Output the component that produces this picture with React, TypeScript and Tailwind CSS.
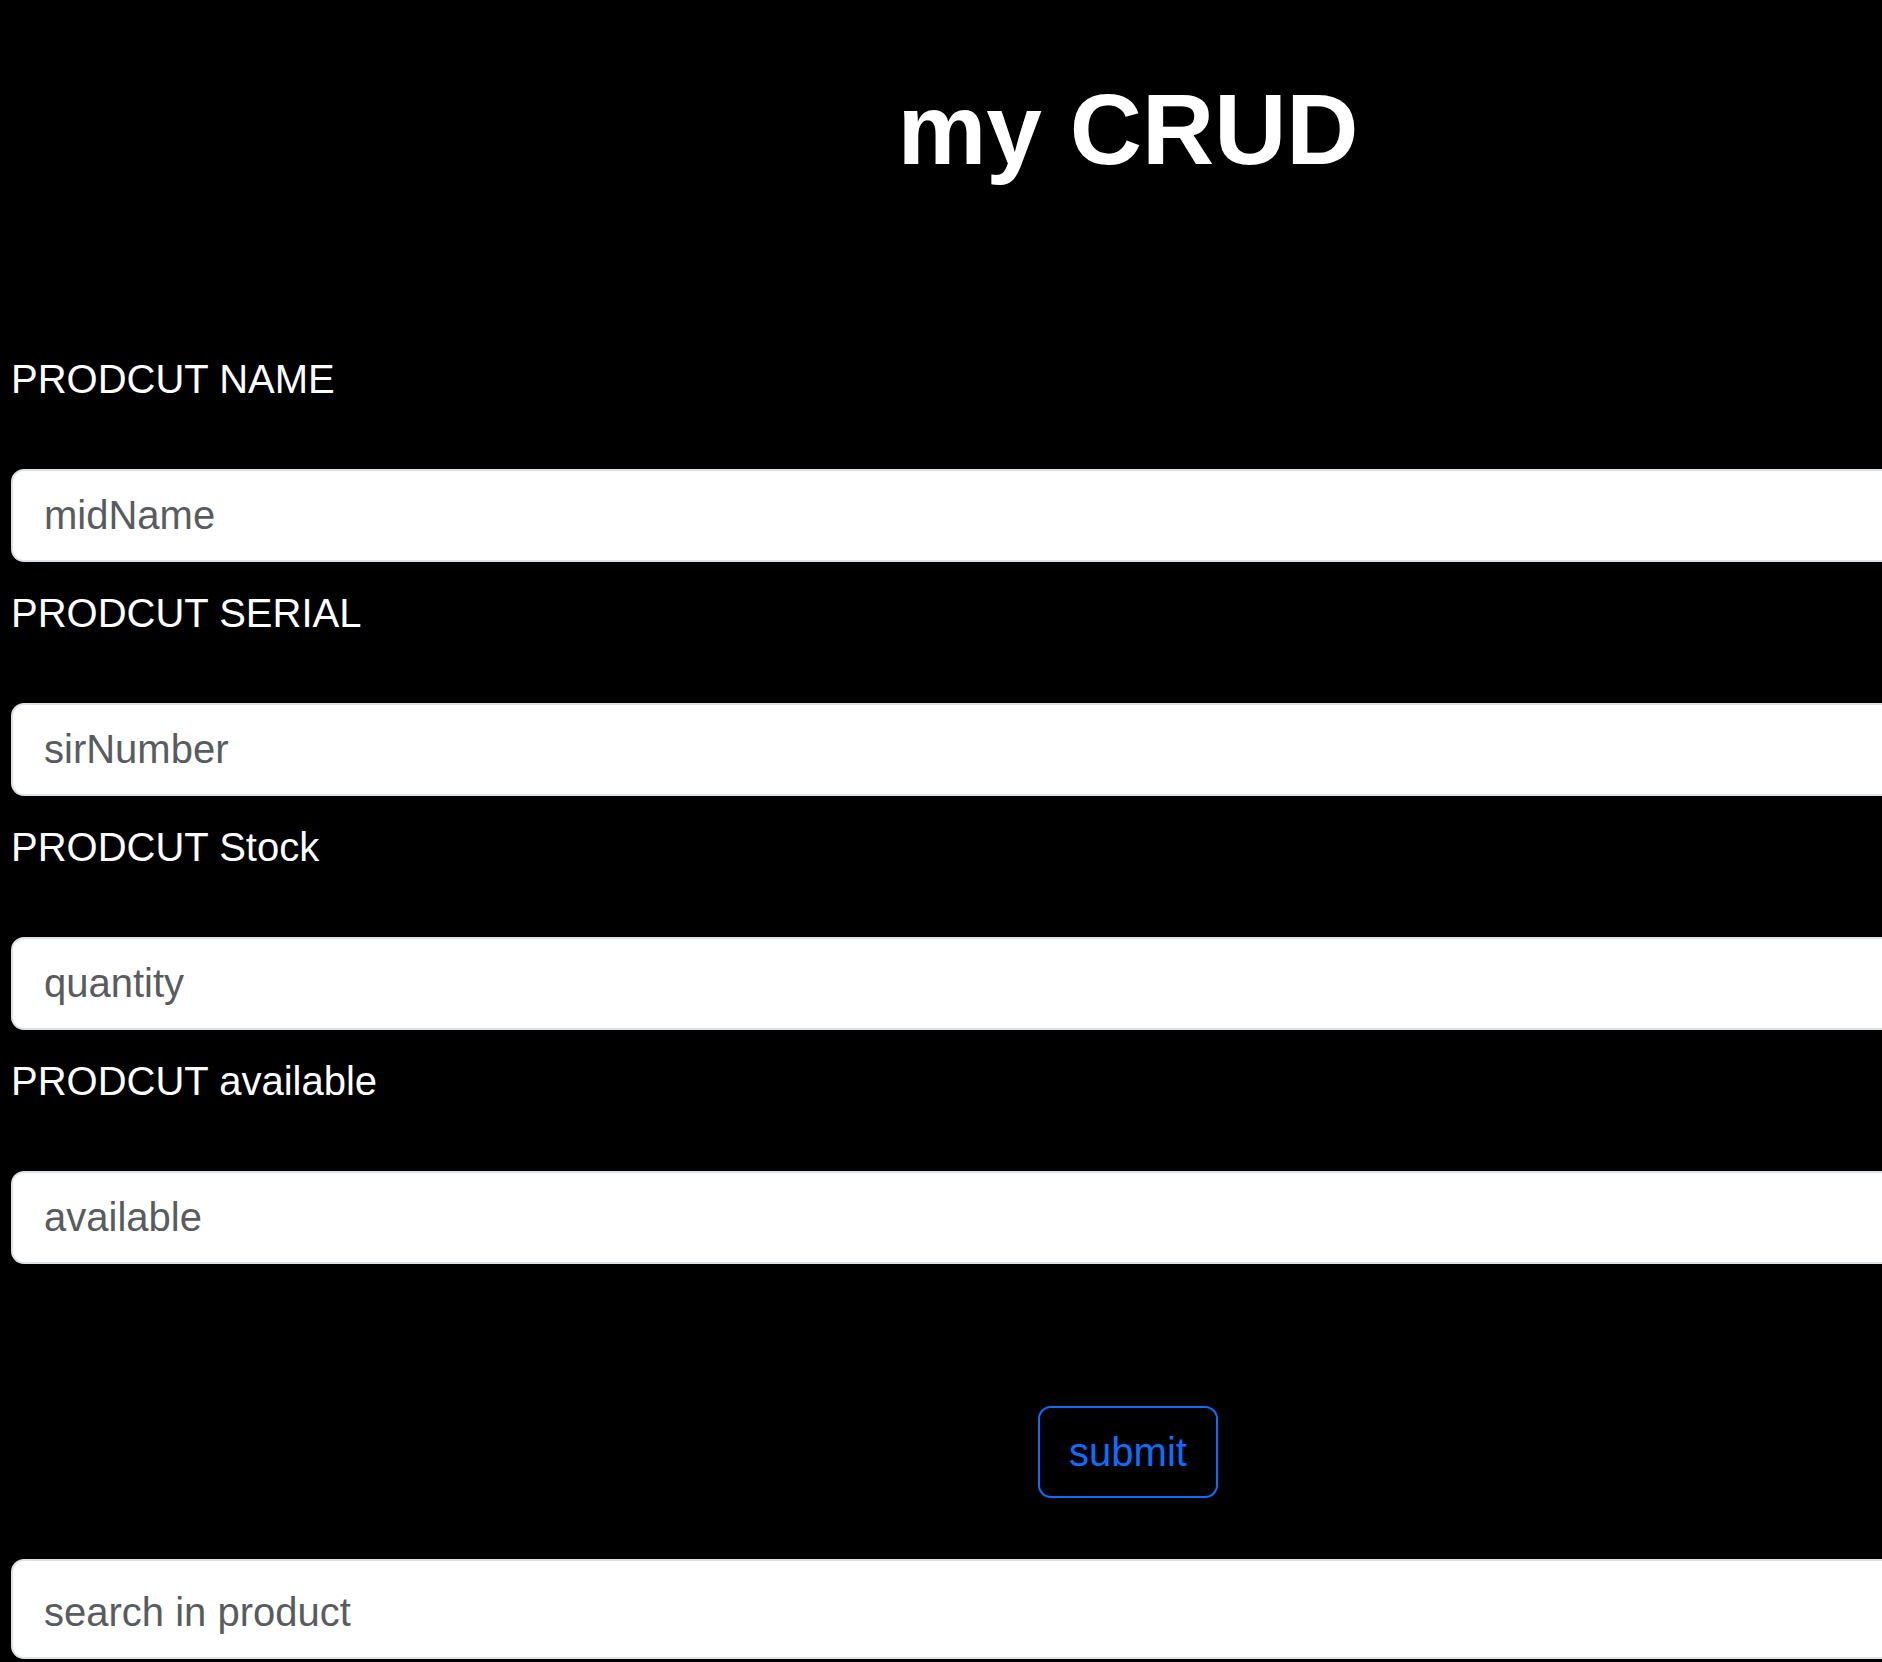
import React from "react";

const labelCls = "block text-[40px] leading-[58px] text-white mb-[61px]";
const inputCls =
  "block w-full h-[93px] rounded-[13px] border-2 border-[#dee2e6] bg-white pl-[31px] text-[40px] text-[#212529] placeholder:text-[#595c5f] outline-none";

export default function App() {
  const fields = [
    { label: "PRODCUT NAME", ph: "midName" },
    { label: "PRODCUT SERIAL", ph: "sirNumber" },
    { label: "PRODCUT Stock", ph: "quantity" },
    { label: "PRODCUT available", ph: "available" },
  ];
  return (
    <div
      className="h-screen w-full overflow-hidden bg-black"
      style={{ fontFamily: '"Liberation Sans", Arial, sans-serif' }}
    >
      <div className="w-[2256px] pl-[11px] pr-[11px]">
        <h1 className="pt-[69px] text-center text-[100px] font-bold leading-[120px] text-white">
          my CRUD
        </h1>
        <div className="mt-[161px] flex flex-col gap-[22px]">
          {fields.map((f) => (
            <div key={f.label}>
              <label className={labelCls}>{f.label}</label>
              <input className={inputCls} placeholder={f.ph} />
            </div>
          ))}
        </div>
        <div className="mt-[142px] flex justify-center">
          <button className="h-[92px] w-[180px] rounded-[13px] border-2 border-[#0d6efd] bg-transparent text-[40px] text-[#0d6efd]">
            submit
          </button>
        </div>
        <input
          className="mt-[61px] block w-full h-[100px] rounded-[13px] border-2 border-[#dee2e6] bg-white pl-[31px] pt-[6px] text-[40px] text-[#212529] placeholder:text-[#595c5f] outline-none"
          placeholder="search in product"
        />
      </div>
    </div>
  );
}
